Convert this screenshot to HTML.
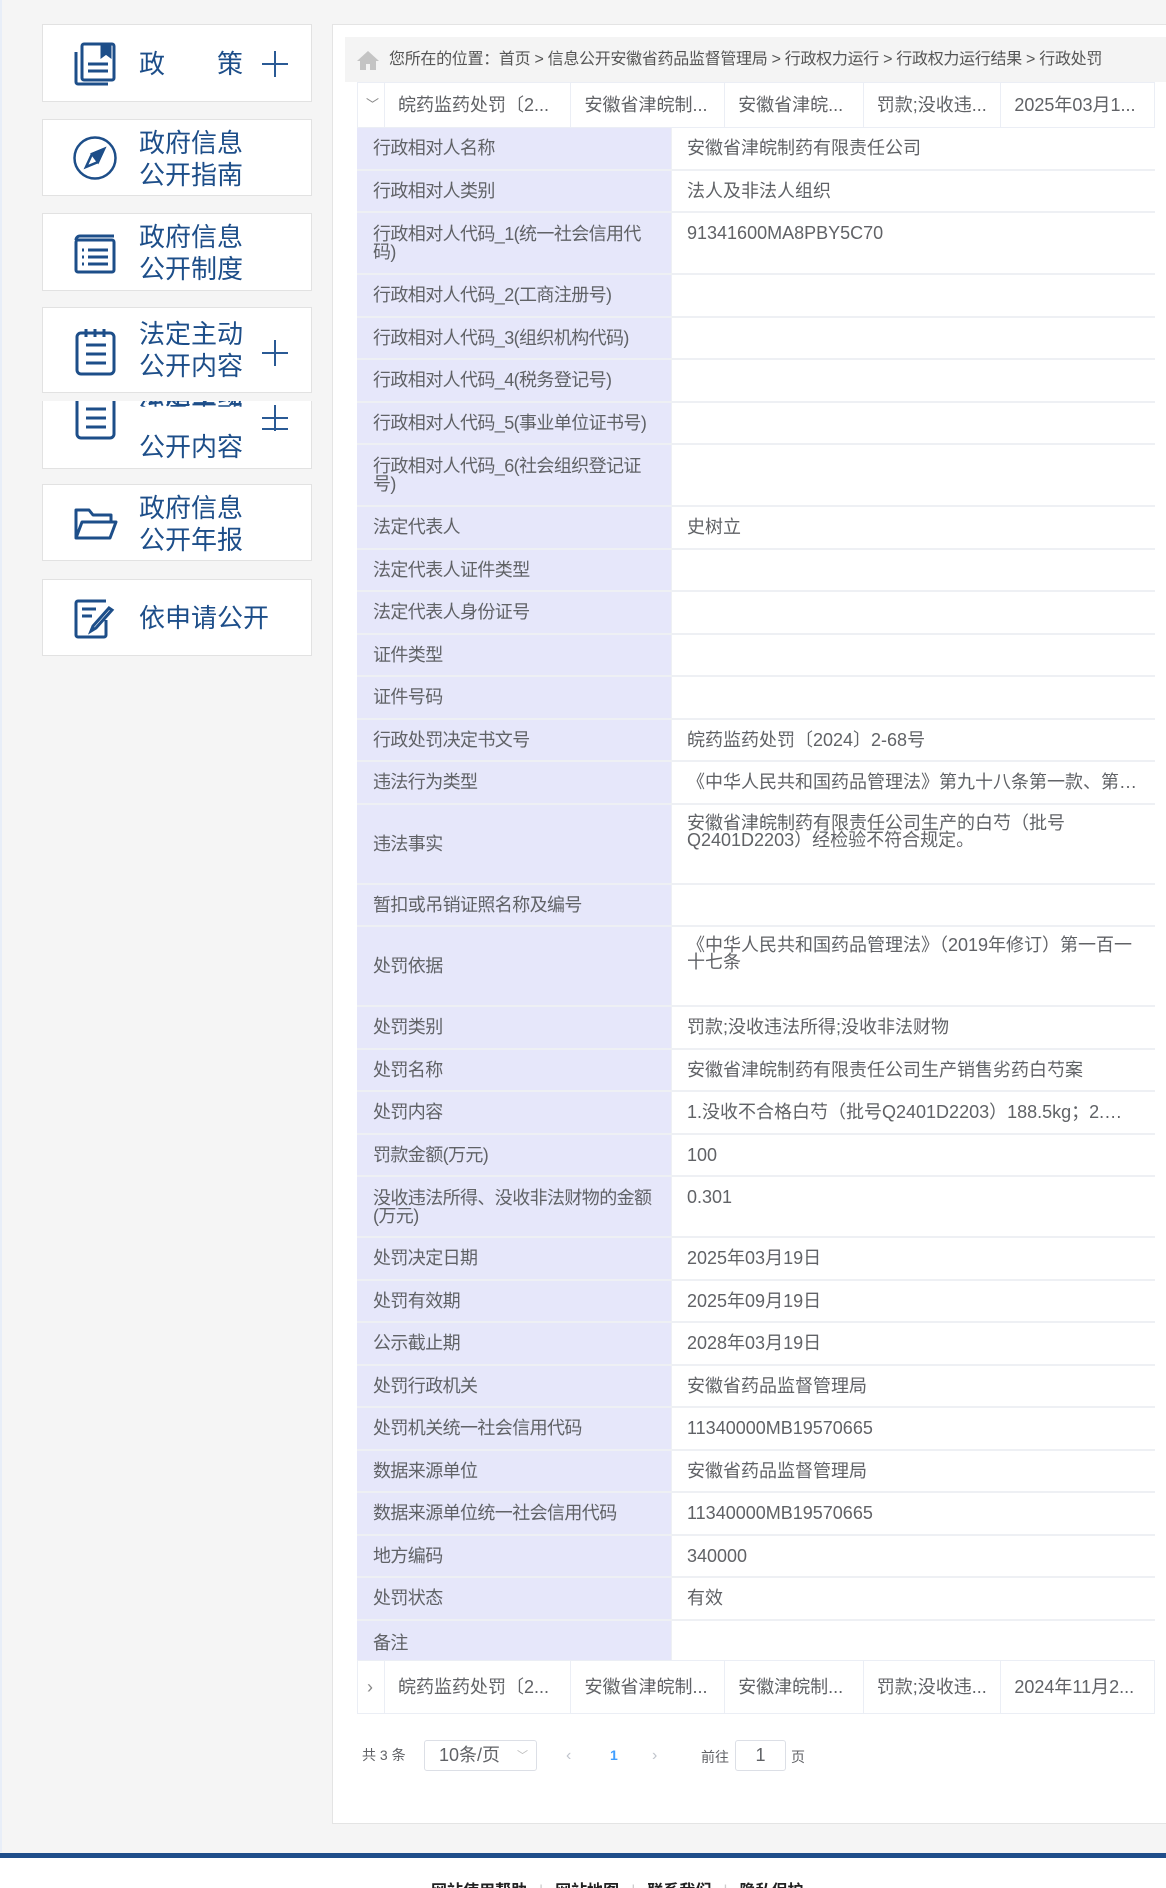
<!DOCTYPE html>
<html><head><meta charset="utf-8"><style>
*{margin:0;padding:0;box-sizing:border-box}
body{width:1166px;height:1888px;overflow:hidden;background:#f5f5f5;font-family:"Liberation Sans","Noto Sans CJK SC",sans-serif;position:relative;color:#606266}
.box{position:absolute;left:42px;width:270px;background:#fff;border:1px solid #e2e2e2;overflow:hidden}
.box svg{position:absolute;left:29px}
.bt{position:absolute;left:96px;font-size:26px;line-height:32px;color:#1d4e89;white-space:nowrap}
.plus{position:absolute;left:219px;width:26px;height:26px}
.plus:before{content:"";position:absolute;left:0;top:12px;width:26px;height:2px;background:#2a5a95}
.plus:after{content:"";position:absolute;left:12px;top:0;width:2px;height:26px;background:#2a5a95}
.panel{position:absolute;left:332px;top:24px;width:840px;height:1800px;background:#fff;border:1px solid #e4e4e4}
.bc{position:absolute;left:345px;top:37px;width:821px;height:45px;background:#f4f4f4;font-size:16px;line-height:45px;color:#555;padding-left:44px;white-space:nowrap;letter-spacing:-0.3px}
.hdr{position:absolute;left:357px;width:798px;height:46px;display:flex;border:1px solid #ebeef5;background:#fff;font-size:18px;color:#606266}
.hdr div{border-right:1px solid #ebeef5;line-height:44px;padding-left:13px;white-space:nowrap;overflow:hidden}
.rows{position:absolute;left:357px;top:128px;width:798px;height:1532px;overflow:hidden}
.r{display:flex;height:42.5px;border-bottom:2px solid #eef0f4;font-size:18px}
.l{width:315px;background:#e6e7fa;padding:0 14px 0 16px;display:flex;align-items:center;line-height:18px;border-right:1px solid #eef0f4;letter-spacing:-0.6px}
.v{flex:1;padding:11px 15px 0;line-height:19px;white-space:nowrap;overflow:hidden;text-overflow:ellipsis}
.v.w{white-space:normal;line-height:17px;padding-top:10px}
.nw{white-space:nowrap}
.pg{position:absolute;top:1740px;font-size:14px;color:#606266;line-height:31px}
</style></head><body>
<div style="position:absolute;left:0;top:0;width:2px;height:1852px;background:#e8eef8"></div>

<div class="box" style="top:24px;height:78px">
<svg style="top:15px" width="46" height="48" viewBox="0 0 46 48" fill="none" stroke="#1d4e89" stroke-width="3"><path d="M4 12v30a2 2 0 0 0 2 2h30"/><rect x="10" y="4" width="32" height="36" rx="2"/><path d="M30 4v12l4-3 4 3V4" fill="#1d4e89"/><path d="M16 24h20M16 31h20"/></svg>
<div class="bt" style="top:23px">政</div><div class="bt" style="top:23px;left:174px">策</div>
<div class="plus" style="top:26px"></div></div>

<div class="box" style="top:119px;height:77px">
<svg style="top:15px" width="46" height="46" viewBox="0 0 46 46" fill="none" stroke="#1d4e89" stroke-width="2.5"><circle cx="23" cy="23" r="20.5"/><path d="M32 14L26 27 14 32 20 19Z" fill="#fff"/><path d="M32 14L20 19 26 27Z" fill="#1d4e89"/></svg>
<div class="bt" style="top:7px">政府信息<br>公开指南</div></div>

<div class="box" style="top:213px;height:78px">
<svg style="top:16px" width="46" height="46" viewBox="0 0 46 46" fill="none" stroke="#1d4e89" stroke-width="3"><path d="M4 10a4 4 0 0 1 4-4h34"/><rect x="4" y="10" width="38" height="32" rx="2"/><path d="M10 20h2M16 20h20M10 27h2M16 27h20M10 34h2M16 34h20"/></svg>
<div class="bt" style="top:7px">政府信息<br>公开制度</div></div>

<div class="box" style="top:307px;height:86px">
<svg style="top:19px" width="46" height="50" viewBox="0 0 46 50" fill="none" stroke="#1d4e89" stroke-width="3"><rect x="5" y="6" width="37" height="41" rx="4"/><path d="M14 2v8M23 2v8M32 2v8M14 18h20M14 27h20M14 36h20" /></svg>
<div class="bt" style="top:10px">法定主动<br>公开内容</div>
<div class="plus" style="top:32px"></div></div>

<div class="box" style="top:401px;height:68px;border-top:none">
<svg style="top:-10px" width="46" height="50" viewBox="0 0 46 50" fill="none" stroke="#1d4e89" stroke-width="3"><rect x="5" y="6" width="37" height="41" rx="4"/><path d="M14 18h20M14 27h20M14 36h20"/></svg>
<div class="bt" style="top:-22px">法定主动</div>
<div class="bt" style="top:-7px;clip-path:inset(0 0 60% 0)">法定主动</div>
<div class="bt" style="top:30px">公开内容</div>
<div class="plus" style="top:4px"></div>
<div style="position:absolute;left:219px;top:27px;width:26px;height:2px;background:#2a5a95"></div></div>

<div class="box" style="top:484px;height:77px">
<svg style="top:15px" width="46" height="46" viewBox="0 0 46 46" fill="none" stroke="#1d4e89" stroke-width="3" stroke-linejoin="round"><path d="M4 38V10h13l4 5h18v7"/><path d="M4 38l6-16h34l-6 16Z"/></svg>
<div class="bt" style="top:7px">政府信息<br>公开年报</div></div>

<div class="box" style="top:579px;height:77px">
<svg style="top:16px" width="46" height="46" viewBox="0 0 46 46" fill="none" stroke="#1d4e89" stroke-width="3"><path d="M34 24v15a2 2 0 0 1-2 2H6a2 2 0 0 1-2-2V7a2 2 0 0 1 2-2h28"/><path d="M10 13h14M10 20h10"/><path d="M40 14L24 32l-5 3 2-5 16-18Z"/></svg>
<div class="bt" style="top:22px">依申请公开</div></div>

<div class="panel"></div>
<div class="bc"><svg style="position:absolute;left:12px;top:13px" width="22" height="20" viewBox="0 0 22 20"><path d="M11 1L0 11h3v9h6v-6h4v6h6v-9h3Z" fill="#c4c4c4"/></svg>您所在的位置：首页 &gt; 信息公开安徽省药品监督管理局 &gt; 行政权力运行 &gt; 行政权力运行结果 &gt; 行政处罚</div>

<div class="hdr" style="top:82px"><div style="width:27px;padding-left:8px;color:#888;font-size:13px">﹀</div><div style="width:187px">皖药监药处罚〔2...</div><div style="width:154px">安徽省津皖制...</div><div style="width:139px">安徽省津皖...</div><div style="width:138px">罚款;没收违...</div><div style="width:153px;border:none">2025年03月1...</div></div>

<div class="rows">
<div class="r"><div class="l">行政相对人名称</div><div class="v">安徽省津皖制药有限责任公司</div></div>
<div class="r"><div class="l">行政相对人类别</div><div class="v">法人及非法人组织</div></div>
<div class="r" style="height:62px"><div class="l">行政相对人代码_1(统一社会信用代码)</div><div class="v">91341600MA8PBY5C70</div></div>
<div class="r"><div class="l nw">行政相对人代码_2(工商注册号)</div><div class="v"></div></div>
<div class="r"><div class="l nw">行政相对人代码_3(组织机构代码)</div><div class="v"></div></div>
<div class="r"><div class="l nw">行政相对人代码_4(税务登记号)</div><div class="v"></div></div>
<div class="r"><div class="l nw">行政相对人代码_5(事业单位证书号)</div><div class="v"></div></div>
<div class="r" style="height:62px"><div class="l">行政相对人代码_6(社会组织登记证号)</div><div class="v"></div></div>
<div class="r"><div class="l">法定代表人</div><div class="v">史树立</div></div>
<div class="r"><div class="l">法定代表人证件类型</div><div class="v"></div></div>
<div class="r"><div class="l">法定代表人身份证号</div><div class="v"></div></div>
<div class="r"><div class="l">证件类型</div><div class="v"></div></div>
<div class="r"><div class="l">证件号码</div><div class="v"></div></div>
<div class="r"><div class="l">行政处罚决定书文号</div><div class="v">皖药监药处罚〔2024〕2-68号</div></div>
<div class="r"><div class="l">违法行为类型</div><div class="v">《中华人民共和国药品管理法》第九十八条第一款、第九十八条第三款</div></div>
<div class="r" style="height:80px"><div class="l">违法事实</div><div class="v w">安徽省津皖制药有限责任公司生产的白芍（批号Q2401D2203）经检验不符合规定。</div></div>
<div class="r"><div class="l">暂扣或吊销证照名称及编号</div><div class="v"></div></div>
<div class="r" style="height:80px"><div class="l">处罚依据</div><div class="v w">《中华人民共和国药品管理法》（2019年修订）第一百一十七条</div></div>
<div class="r"><div class="l">处罚类别</div><div class="v">罚款;没收违法所得;没收非法财物</div></div>
<div class="r"><div class="l">处罚名称</div><div class="v">安徽省津皖制药有限责任公司生产销售劣药白芍案</div></div>
<div class="r"><div class="l">处罚内容</div><div class="v">1.没收不合格白芍（批号Q2401D2203）188.5kg；2.没收违法所得</div></div>
<div class="r"><div class="l">罚款金额(万元)</div><div class="v">100</div></div>
<div class="r" style="height:61px"><div class="l">没收违法所得、没收非法财物的金额(万元)</div><div class="v">0.301</div></div>
<div class="r"><div class="l">处罚决定日期</div><div class="v">2025年03月19日</div></div>
<div class="r"><div class="l">处罚有效期</div><div class="v">2025年09月19日</div></div>
<div class="r"><div class="l">公示截止期</div><div class="v">2028年03月19日</div></div>
<div class="r"><div class="l">处罚行政机关</div><div class="v">安徽省药品监督管理局</div></div>
<div class="r"><div class="l">处罚机关统一社会信用代码</div><div class="v">11340000MB19570665</div></div>
<div class="r"><div class="l">数据来源单位</div><div class="v">安徽省药品监督管理局</div></div>
<div class="r"><div class="l">数据来源单位统一社会信用代码</div><div class="v">11340000MB19570665</div></div>
<div class="r"><div class="l">地方编码</div><div class="v">340000</div></div>
<div class="r"><div class="l">处罚状态</div><div class="v">有效</div></div>
<div class="r" style="border-bottom:none;height:44px"><div class="l">备注</div><div class="v"></div></div>
</div>

<div class="hdr" style="top:1660px;height:54px"><div style="width:27px;padding-left:9px;color:#888;line-height:52px">›</div><div style="width:187px;line-height:52px">皖药监药处罚〔2...</div><div style="width:154px;line-height:52px">安徽省津皖制...</div><div style="width:139px;line-height:52px">安徽津皖制...</div><div style="width:138px;line-height:52px">罚款;没收违...</div><div style="width:153px;border:none;line-height:52px">2024年11月2...</div></div>

<div class="pg" style="left:362px">共 3 条</div>
<div class="pg" style="left:424px;width:113px;height:31px;border:1px solid #dcdfe6;border-radius:3px;font-size:18px;padding-left:14px;line-height:29px">10条/页<span style="position:absolute;right:8px;top:1px;font-size:11px;color:#bbb">﹀</span></div>
<div class="pg" style="left:566px;color:#c0c4cc;font-size:16px">‹</div>
<div class="pg" style="left:610px;color:#409eff;font-weight:bold">1</div>
<div class="pg" style="left:652px;color:#c0c4cc;font-size:16px">›</div>
<div class="pg" style="left:701px;top:1742px">前往</div>
<div class="pg" style="left:735px;width:51px;height:31px;border:1px solid #dcdfe6;border-radius:3px;text-align:center;font-size:18px;line-height:29px">1</div>
<div class="pg" style="left:791px;top:1742px">页</div>

<div style="position:absolute;left:0;top:1853px;width:1166px;height:5px;background:#1f4e8a"></div>
<div style="position:absolute;left:0;top:1858px;width:1166px;height:30px;background:#fff"></div>
<div style="position:absolute;left:431px;top:1882px;font-size:16px;font-weight:bold;color:#222;white-space:nowrap;line-height:20px;height:6px;overflow:hidden">网站使用帮助<span style="color:#ccc;font-weight:normal;margin:0 12px">|</span>网站地图<span style="color:#ccc;font-weight:normal;margin:0 12px">|</span>联系我们<span style="color:#ccc;font-weight:normal;margin:0 12px">|</span>隐私保护</div>
</body></html>
